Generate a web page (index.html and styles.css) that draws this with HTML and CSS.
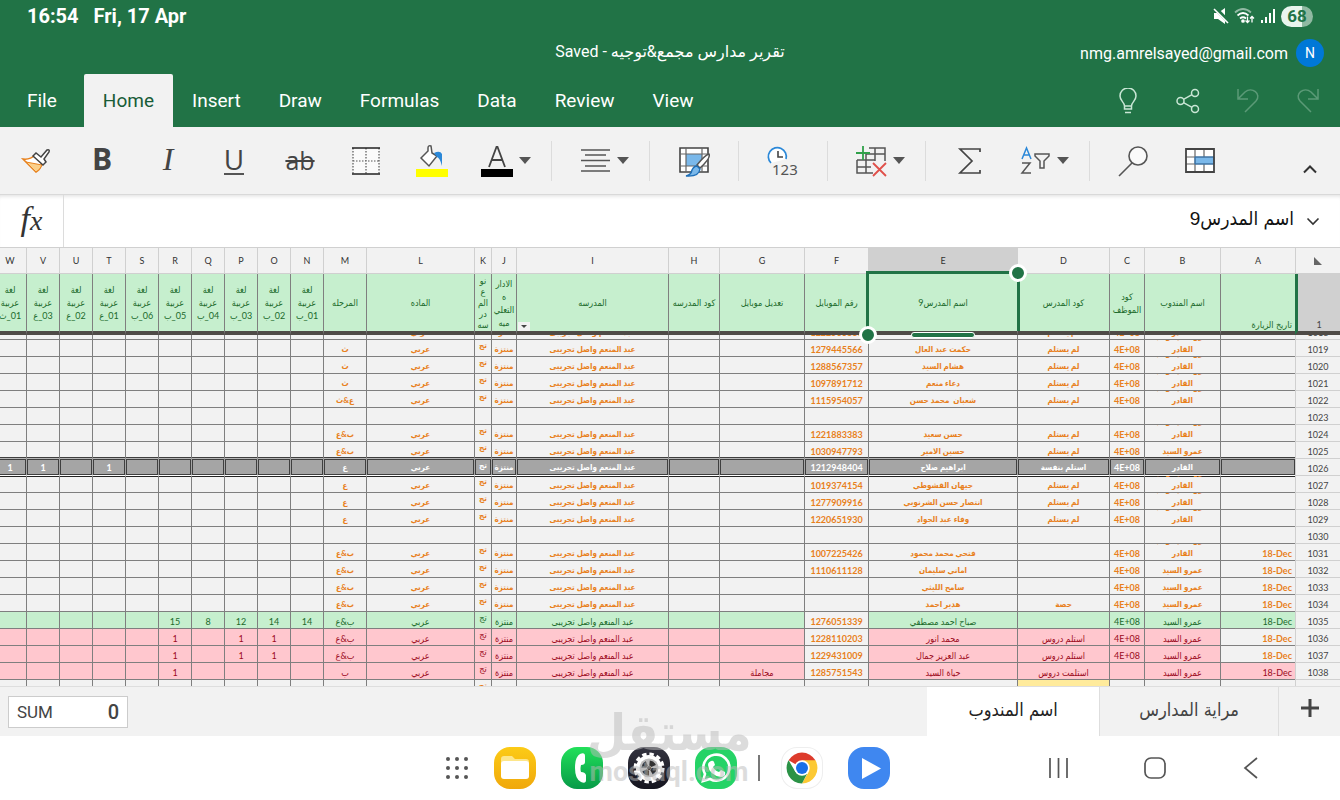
FILE: index.html
```html
<!DOCTYPE html>
<html lang="en">
<head>
  <meta charset="UTF-8">
  <meta name="viewport" content="width=device-width, initial-scale=1.0">
  <title>تقرير مدارس مجمع&amp;توجيه</title>
  <link rel="stylesheet" href="styles.css">
</head>
<body>
  <header class="app-header">
    <div class="status-bar">
      <span class="clock">16:54</span>
      <span class="date">Fri, 17 Apr</span>
      <div class="status-icons">
        <svg width="16" height="18" viewBox="0 0 16 18"><path d="M1 6h4l7-5v16l-7-5H1z" fill="#fff"/><path d="M1 0l15 15" stroke="#217346" stroke-width="4"/><path d="M1 2l14 14" stroke="#fff" stroke-width="1.600"/></svg>
        <svg width="21" height="18" viewBox="0 0 21 18" fill="none" stroke="#fff" stroke-width="1.700"><path d="M1 5.500q8-7 16 0" opacity=".5"/><path d="M3.500 8.500q5.500-5 11 0M6 11.500q3-2.500 6 0"/><circle cx="9" cy="14" r="1" fill="#fff"/><path d="M13.500 9.500v6m-2-2l2 2 2-2M18 15.500v-6m-2 2l2-2 2 2" stroke-width="1.300"/></svg>
        <svg width="16" height="18" viewBox="0 0 16 18" stroke="#fff" stroke-width="2"><path d="M2 13v3M6 10v6M10 6v10M14 2v14"/></svg>
        <span class="battery">68</span>
      </div>
    </div>
    <div class="title-bar">
      <div class="doc-title" dir="rtl">تقرير مدارس مجمع&amp;توجيه - Saved</div>
      <div class="account">
        <span>nmg.amrelsayed@gmail.com</span>
        <button class="avatar">N</button>
      </div>
    </div>
    <nav class="ribbon-tabs">
      <button class="tab file">File</button>
      <button class="tab active">Home</button>
      <button class="tab">Insert</button>
      <button class="tab">Draw</button>
      <button class="tab">Formulas</button>
      <button class="tab">Data</button>
      <button class="tab">Review</button>
      <button class="tab">View</button>
      <div class="header-actions">
        <button aria-label="Tell me"><svg width="24" height="26" viewBox="0 0 24 26"><path d="M8.500 18c0-4-4.500-5-4.500-10a8 8 0 0 1 16 0c0 5-4.500 6-4.500 10zM8.500 18v3h7v-3M9 24.500h6"/></svg></button>
        <button aria-label="Share"><svg width="24" height="26" viewBox="0 0 24 26"><circle cx="4.500" cy="13" r="3.500"/><circle cx="19" cy="5" r="3.500"/><circle cx="19" cy="21" r="3.500"/><path d="M7.500 11.300L16 6.700M7.500 14.700l8.500 4.600"/></svg></button>
        <button aria-label="Undo" disabled><svg width="24" height="26" viewBox="0 0 24 26"><path d="M2 1v10h10M2 11l7-7c7-6 17 2 11 9L9 24"/></svg></button>
        <button aria-label="Redo" disabled><svg width="24" height="26" viewBox="0 0 24 26"><path d="M22 1v10H12M22 11l-7-7C8-2 -2 6 4 13l11 11"/></svg></button>
      </div>
    </nav>
  </header>

  <div class="toolbar">
    <div class="group first">
      <button class="tool" aria-label="Format painter"><svg width="32" height="32" viewBox="0 0 32 32"><path d="M3 14q7 1 12-4l7 9q-2 6-6 8z" fill="#fff" stroke="#e8821e" stroke-width="1.500"/><path d="M6 17l16 3q-2 5-6 7z" fill="#fbd08a" stroke="#e8821e"/><path d="M13 11l3-3 5 4 6-7q3-1 2 2l-5 7 2 3-3 3z" fill="#fff" stroke="#444" stroke-width="1.500"/></svg></button>
      <button class="tool bold" aria-label="Bold">B</button>
      <button class="tool italic" aria-label="Italic">I</button>
      <button class="tool underline" aria-label="Underline"><span>U</span></button>
      <button class="tool strike" aria-label="Strikethrough"><span>ab</span></button>
      <button class="tool" aria-label="Borders"><svg width="32" height="32" viewBox="0 0 32 32"><path d="M3 3h26v26H3z" fill="#fafafa"/><path d="M3 3v26M29 3v26M16 3v26M3 16h26" stroke="#555" stroke-width="1.200" stroke-dasharray="1.500 1.500"/><path d="M2 3h28M2 29h28" stroke="#222" stroke-width="1.600"/></svg></button>
      <button class="tool" aria-label="Fill colour"><svg width="32" height="32" viewBox="0 0 32 32"><path d="M0 24h32v8H0z" fill="#ff0"/><path d="M5 13l7-7V3q0-3 3-2l1 7 5 3-8 10z" fill="#fff" stroke="#555" stroke-width="1.500"/><path d="M18 8q6-3 8 1v12q-2-8-5-9z" fill="#2b88d8"/></svg></button>
      <button class="tool drop" aria-label="Font colour"><svg width="32" height="32" viewBox="0 0 32 32"><path d="M0 24h32v8H0z"/><path d="M8 22L15.500 2h1L24 22M11 15h10" fill="none" stroke="#444" stroke-width="1.800"/></svg><i class="arrow"></i></button>
    </div>
    <div class="group">
      <button class="tool drop" aria-label="Alignment"><svg width="32" height="32" viewBox="0 0 32 32"><path d="M2 5h29M6 10h21M2 15.500h29M6 21h21M2 26h29" stroke="#555" stroke-width="1.600"/></svg><i class="arrow"></i></button>
    </div>
    <div class="group">
      <button class="tool" aria-label="Cell styles"><svg width="32" height="32" viewBox="0 0 32 32"><path d="M2 3h28v24H2z" fill="#fff" stroke="#444" stroke-width="1.600"/><path d="M8 9h16v12H8z" fill="#7ab8ea"/><path d="M8 3v24M24 3v24M2 9h28M2 21h28" stroke="#666" stroke-width="1.200"/><path d="M31 9q2 4-9 14l-3-3Q27 10 31 9z" fill="#fff" stroke="#555" stroke-width="1.500"/><path d="M19 21l3 3q-1 8-14 7 5-1 6-6 2-4 5-4z" fill="#7ab8ea" stroke="#1e6fb8" stroke-width="1.400"/></svg></button>
    </div>
    <div class="group">
      <button class="tool" aria-label="Number format"><svg width="32" height="32" viewBox="0 0 32 32"><path d="M4 18A9 9 0 1 1 19 14" fill="#fff" stroke="#2b88d8" stroke-width="1.700"/><path d="M11 6v6h5" fill="none" stroke="#444" stroke-width="1.600"/><text x="5" y="30" font-family="Noto Sans" font-size="15" fill="#555">123</text></svg></button>
    </div>
    <div class="group">
      <button class="tool drop" aria-label="Insert and delete cells"><svg width="32" height="32" viewBox="0 0 32 32"><path d="M14 3h16v13M2 15v13h16M2 15h18M11 9h19M11 9v19M20 3v13M2 22h14" fill="none" stroke="#555" stroke-width="1.500"/><path d="M8 1v14M1 8h14" stroke="#30a04a" stroke-width="1.800"/><path d="M18 18l13 13M31 18L18 31" stroke="#e0504a" stroke-width="1.800"/></svg><i class="arrow"></i></button>
    </div>
    <div class="group">
      <button class="tool" aria-label="AutoSum"><svg width="32" height="32" viewBox="0 0 32 32"><path d="M26 7V4H6l12 12L6 28h20v-3" fill="none" stroke="#444" stroke-width="1.700"/></svg></button>
      <button class="tool drop" aria-label="Sort and filter"><svg width="32" height="32" viewBox="0 0 32 32" fill="none" stroke-width="1.500"><path d="M3 14L7.500 3 12 14M4.500 10h6" stroke="#2b88d8"/><path d="M3 18h8L3 28h9M16 9h14v2l-5 5v7h-4v-7l-5-5z" stroke="#555"/></svg><i class="arrow"></i></button>
    </div>
    <div class="group last">
      <button class="tool" aria-label="Find"><svg width="32" height="32" viewBox="0 0 32 32"><circle cx="20" cy="11" r="9" fill="#fafafa" stroke="#555" stroke-width="1.600"/><path d="M14 18L1 31" stroke="#555" stroke-width="1.600"/></svg></button>
      <button class="tool" aria-label="Table"><svg width="32" height="32" viewBox="0 0 32 32"><path d="M2 4h28v23H2z" fill="#fff"/><path d="M11 12h19v7H11z" fill="#7ab8ea"/><path d="M2 12h28M2 19h28M11 4v23M20 4v8M20 19v8" stroke="#666" stroke-width="1.200"/><path d="M11 12h19v7H11z" fill="none" stroke="#2b78c0"/><path d="M2 4h28v23H2z" fill="none" stroke="#444" stroke-width="1.800"/></svg></button>
    </div>
    <button class="collapse" aria-label="Collapse ribbon"><svg width="16" height="10" viewBox="0 0 16 10"><path d="M2 8.500l6-6 6 6" fill="none" stroke="#333" stroke-width="2"/></svg></button>
  </div>

  <div class="formula-bar">
    <button class="fx" aria-label="Insert function"><i>f</i><i class="fx-x">x</i></button>
    <input class="formula-input" type="text" dir="rtl" aria-label="Formula" value="اسم المدرس9">
    <button class="expand" aria-label="Expand formula bar"><svg width="14" height="9" viewBox="0 0 14 9"><path d="M1.500 1.500L7 7l5.500-5.500" fill="none" stroke="#333" stroke-width="1.600"/></svg></button>
  </div>

  <main class="sheet" dir="rtl">
    <table class="grid">
      <colgroup id="cols"></colgroup>
      <thead>
        <tr class="letters" id="letters"></tr>
        <tr class="titles" id="titles"></tr>
      </thead>
      <tbody id="rows"></tbody>
    </table>
  </main>

  <footer class="sheet-bar">
    <button class="sum"><span>SUM</span><b>0</b></button>
    <div class="sheet-tabs">
      <button class="sheet-tab current">اسم المندوب</button>
      <button class="sheet-tab">مراية المدارس</button>
      <button class="add-sheet" aria-label="Add sheet"><svg width="18" height="18" viewBox="0 0 18 18"><path d="M9 0v18M0 9h18" stroke="#444" stroke-width="3"/></svg></button>
    </div>
  </footer>

  <nav class="taskbar">
    <div class="dock">
      <button aria-label="Apps"><svg width="24" height="24" viewBox="0 0 24 24" fill="#555"><circle cx="3" cy="3" r="2"/><circle cx="12" cy="3" r="2"/><circle cx="21" cy="3" r="2"/><circle cx="3" cy="12" r="2"/><circle cx="12" cy="12" r="2"/><circle cx="21" cy="12" r="2"/><circle cx="3" cy="21" r="2"/><circle cx="12" cy="21" r="2"/><circle cx="21" cy="21" r="2"/></svg></button>
      <button class="app files" aria-label="My Files"><svg width="42" height="42" viewBox="0 0 42 42"><path d="M7 12q0-3 3-3h8l3 3h11q3 0 3 3v6H7z" fill="#fde68a"/><rect x="7" y="14" width="28" height="18" rx="3" fill="#fff"/></svg></button>
      <button class="app phone" aria-label="Phone"><svg width="42" height="42" viewBox="0 0 42 42"><path d="M19 7q5-2 5 2v6q0 3-4 3-1 4 0 7 4 0 5 3v5q0 4-5 2-6-3-6-14t5-14z" fill="#fff"/></svg></button>
      <button class="app settings" aria-label="Settings"><svg width="42" height="42" viewBox="0 0 42 42"><circle cx="21" cy="21" r="14" fill="none" stroke="#fff" stroke-width="3" stroke-dasharray="4.400 2.930"/><circle cx="21" cy="21" r="13" fill="#fff"/><circle cx="21" cy="21" r="9.500" fill="#bbb"/><circle cx="21" cy="21" r="5" fill="none" stroke="#333" stroke-width="5" stroke-dasharray="5 2.850"/><circle cx="21" cy="21" r="2" fill="#333"/></svg></button>
      <button class="app whatsapp" aria-label="WhatsApp"><svg width="42" height="42" viewBox="0 0 42 42"><path d="M8 34l2-7a13 13 0 1 1 5 5z" fill="none" stroke="#fff" stroke-width="2.600"/><path d="M16 14q2-1 3 1l1 3-2 2q2 4 6 5l2-2 4 2q1 5-4 5-12-2-13-12 0-3 3-4z" fill="#fff"/></svg></button>
      <span class="divider"></span>
      <button class="app chrome" aria-label="Chrome"><svg width="42" height="42" viewBox="0 0 42 42"><path d="M21 21L7.600 13.300A15.500 15.500 0 0 1 34.400 13.300L28 21z" fill="#dd3b2c"/><path d="M21 13.300h13.400A15.500 15.500 0 0 1 21 36.500L27.500 25z" fill="#fcc934"/><path d="M7.600 13.300L14.500 25 26 27l-5 9.500A15.500 15.500 0 0 1 7.600 13.300z" fill="#2b9246"/><circle cx="21" cy="21" r="7.700" fill="#fff"/><circle cx="21" cy="21" r="6" fill="#1a6fe8"/></svg></button>
      <button class="app play" aria-label="Play"><svg width="42" height="42" viewBox="0 0 42 42"><path d="M14 11v21l19-10.500z" fill="#fff"/></svg></button>
    </div>
    <div class="system-nav">
      <button aria-label="Recents"><svg width="22" height="22" viewBox="0 0 22 22"><path d="M2 1v20M10.500 1v20M19 1v20"/></svg></button>
      <button aria-label="Home screen"><svg width="22" height="22" viewBox="0 0 22 22"><rect x="1" y="1" width="20" height="20" rx="6"/></svg></button>
      <button aria-label="Back"><svg width="22" height="22" viewBox="0 0 22 22"><path d="M17 1L5 11l12 10"/></svg></button>
    </div>
  </nav>

  <div class="watermark">
    <span class="watermark-ar">مستقل</span>
    <span class="watermark-en">mostaql.com</span>
  </div>

  <script>
    // letter, width, header title
    const columns = [
      ["A", 75, "تاريخ الزيارة"],
      ["B", 76, "اسم المندوب"],
      ["C", 35, "كود\nالموظف"],
      ["D", 92, "كود المدرس"],
      ["E", 149, "اسم المدرس9"],
      ["F", 64, "رقم الموبايل"],
      ["G", 85, "تعديل موبايل"],
      ["H", 51, "كود المدرسه"],
      ["I", 152, "المدرسه"],
      ["J", 25, "الادار\nه\nالتعلي\nميه"],
      ["K", 17, "نو\nع\nالم\nدر\nسه"],
      ["L", 108, "الماده"],
      ["M", 43, "المرحله"],
      ["N", 33, "لغة\nعربية\n01_ب"],
      ["O", 33, "لغة\nعربية\n02_ب"],
      ["P", 33, "لغة\nعربية\n03_ب"],
      ["Q", 33, "لغة\nعربية\n04_ب"],
      ["R", 33, "لغة\nعربية\n05_ب"],
      ["S", 33, "لغة\nعربية\n06_ب"],
      ["T", 33, "لغة\nعربية\n01_ع"],
      ["U", 33, "لغة\nعربية\n02_ع"],
      ["V", 33, "لغة\nعربية\n03_ع"],
      ["W", 33, "لغة\nعربية\n01_ث"]
    ];

    const qader = "عمرو السيد و عبد\nالقادر";
    const amr = "عمرو السيد";
    const no = "لم يستلم";
    const code = "4E+08";

    // every filled row has the same school
    const school = { I: "عبد المنعم واصل تجريبى", J: "منتزة", K: "تج\nريبى", L: "عربي" };

    const rows = [
      { n: 1018, cls: "cut-top", B: qader, C: code, D: no, F: "1222563886" },
      { n: 1019, B: qader, C: code, D: no, E: "حكمت عبد العال", F: "1279445566", M: "ث" },
      { n: 1020, B: qader, C: code, D: no, E: "هشام السيد", F: "1288567357", M: "ث" },
      { n: 1021, B: qader, C: code, D: no, E: "دعاء منعم", F: "1097891712", M: "ث" },
      { n: 1022, B: qader, C: code, D: no, E: "شعبان  محمد حسن", F: "1115954057", M: "ع&ث" },
      { n: 1023, empty: true },
      { n: 1024, B: qader, C: code, D: no, E: "حسن سعيد", F: "1221883383", M: "ب&ع" },
      { n: 1025, cls: "before-gray", B: amr, C: code, D: no, E: "حسين الامير", F: "1030947793", M: "ب&ع" },
      { n: 1026, cls: "gray", B: qader, C: code, D: "استلم بنفسة", E: "ابراهيم صلاح", F: "1212948404", M: "ع", T: 1, V: 1, W: 1 },
      { n: 1027, cls: "after-gray", B: qader, C: code, D: no, E: "جيهان القشوطي", F: "1019374154", M: "ع" },
      { n: 1028, B: qader, C: code, D: no, E: "انتصار حسن الشرنوبي", F: "1277909916", M: "ع" },
      { n: 1029, B: qader, C: code, D: no, E: "وفاء عبد الجواد", F: "1220651930", M: "ع" },
      { n: 1030, empty: true },
      { n: 1031, A: "18-Dec", B: qader, C: code, E: "فتحي محمد محمود", F: "1007225426", M: "ب&ع" },
      { n: 1032, A: "18-Dec", B: amr, C: code, E: "اماني سليمان", F: "1110611128", M: "ب&ع" },
      { n: 1033, A: "18-Dec", B: amr, C: code, E: "سامح الليثي", M: "ب&ع" },
      { n: 1034, A: "18-Dec", B: amr, C: code, D: "حصة", E: "هدير احمد", M: "ب&ع" },
      { n: 1035, cls: "good", plain: "F", A: "18-Dec", B: amr, C: code, E: "صباح احمد مصطفي", F: "1276051339", M: "ب&ع", N: 14, O: 14, P: 12, Q: 8, R: 15 },
      { n: 1036, cls: "bad", plain: "AF", A: "18-Dec", B: amr, C: code, D: "استلم دروس", E: "محمد انور", F: "1228110203", M: "ب&ع", O: 1, P: 1, R: 1 },
      { n: 1037, cls: "bad", plain: "AF", A: "18-Dec", B: amr, C: code, D: "استلم دروس", E: "عبد العزيز جمال", F: "1229431009", M: "ب&ع", O: 1, P: 1, R: 1 },
      { n: 1038, cls: "bad", plain: "F", A: "18-Dec", B: amr, D: "استلمت دروس", E: "حياة السيد", F: "1285751543", G: "مجاملة", M: "ب", R: 1 },
      { n: 1039, cls: "cut-bottom", empty: true, K: "تج" }
    ];

    function addCell(row, tag, className, text) {
      const cell = document.createElement(tag);
      cell.className = className;
      const box = document.createElement("div");
      box.className = "box";
      const label = document.createElement("span");
      label.textContent = text;
      if (/[\u0600-\u06ff]/.test(text)) label.className = "ar";
      box.appendChild(label);
      cell.appendChild(box);
      row.appendChild(cell);
      return cell;
    }

    const cols = document.getElementById("cols");
    [45, ...columns.map((c) => c[1])].forEach((width) => {
      const col = document.createElement("col");
      col.style.width = width + "px";
      cols.appendChild(col);
    });

    const letters = document.getElementById("letters");
    const titles = document.getElementById("titles");
    addCell(letters, "th", "corner", "");
    addCell(titles, "th", "row-number selected", "1");
    columns.forEach(([letter, width, title]) => {
      addCell(letters, "th", letter === "E" ? "selected" : "", letter);
      const cell = addCell(titles, "th", "col-" + letter.toLowerCase(), title);
      if (letter === "E") {
        cell.insertAdjacentHTML("beforeend", '<div class="selection"><i class="handle start"></i><i class="handle end"></i><i class="grip"></i></div>');
      }
      if (letter === "I") {
        cell.insertAdjacentHTML("beforeend", '<button class="filter" aria-label="Filter"></button>');
      }
    });

    const tbody = document.getElementById("rows");
    rows.forEach((data) => {
      const tr = document.createElement("tr");
      tr.className = data.cls || "";
      addCell(tr, "th", "row-number", data.n);
      const values = data.empty ? data : { ...school, ...data };
      columns.forEach(([letter]) => {
        const plain = data.plain && data.plain.includes(letter) ? " plain" : "";
        addCell(tr, "td", "col-" + letter.toLowerCase() + plain, values[letter] ?? "");
      });
      tbody.appendChild(tr);
    });
  </script>
</body>
</html>
```

FILE: styles.css
```css
* {
  box-sizing: border-box;
}

body {
  margin: 0;
  height: 100vh;
  display: flex;
  flex-direction: column;
  overflow: hidden;
  position: relative;
  font-family: Roboto, "DejaVu Sans", sans-serif;
  background: #fff;
  color: #333;
}

button {
  border: 0;
  padding: 0;
  background: none;
  color: inherit;
  font-family: inherit;
  cursor: pointer;
}

svg {
  display: block;
}

/* header */
.app-header {
  background: #217346;
  color: #fff;
}

.status-bar {
  display: flex;
  align-items: center;
  gap: 15px;
  height: 32px;
  padding: 0 27px;
  font-size: 20px;
  font-weight: bold;
}

.status-icons {
  display: flex;
  align-items: center;
  gap: 5px;
  margin-left: auto;
}

.battery {
  width: 32px;
  border-radius: 11px;
  background: linear-gradient(to right, #e9f5ee 66%, #90b9a2 66%);
  color: #217346;
  font-size: 17px;
  line-height: 21px;
  text-align: center;
}

.title-bar {
  display: grid;
  grid-template-columns: 1fr auto 1fr;
  align-items: center;
  height: 42px;
  padding: 0 16px;
}

.doc-title {
  grid-column: 2;
  padding-bottom: 4px;
  font-size: 16px;
}

.account {
  display: flex;
  justify-content: flex-end;
  align-items: center;
  gap: 8px;
  font-size: 16px;
}

.avatar {
  width: 28px;
  height: 28px;
  border-radius: 50%;
  background: #0078d7;
  font-size: 14px;
}

.ribbon-tabs {
  display: flex;
  height: 53px;
}

.tab {
  padding: 0 19px;
  font-size: 19px;
}

.tab.file {
  padding: 0 27px;
}

.tab.active {
  border-radius: 2px 2px 0 0;
  background: #f2f2f2;
  color: #185c37;
}

.header-actions {
  display: flex;
  gap: 36px;
  margin-left: auto;
  padding-right: 20px;
}

.header-actions svg {
  fill: none;
  stroke: #c9e6d5;
  stroke-width: 1.5;
}

.header-actions button:disabled svg {
  stroke: #5b9a77;
}

/* toolbar */
.toolbar {
  display: flex;
  align-items: center;
  height: 68px;
  background: #f2f2f2;
  border-bottom: 1px solid #d9d9d9;
}

.group {
  display: flex;
  align-items: center;
  height: 40px;
  padding: 0 11px;
  border-right: 1px solid #dcdcdc;
}

.group.first {
  padding-left: 3px;
}

.group.last {
  border-right: 0;
}

.tool {
  display: flex;
  justify-content: center;
  align-items: center;
  width: 66px;
  height: 40px;
  color: #444;
  font-family: "Open Sans", sans-serif;
  font-size: 28px;
}

.tool.drop {
  gap: 6px;
  width: 75px;
  padding-left: 6px;
}

.arrow {
  border: 6px solid transparent;
  border-top: 7px solid #555;
  border-bottom: 0;
}

.tool.bold {
  padding-bottom: 4px;
  font-size: 30px;
  font-weight: bold;
}

.tool.italic {
  padding-bottom: 2px;
  font-family: "Liberation Serif", serif;
  font-size: 32px;
  font-style: italic;
}

.underline span {
  border-bottom: 2px solid #555;
  line-height: 27px;
}

.tool.strike {
  padding-bottom: 2px;
  font-size: 25px;
  text-decoration: line-through 2px;
}

.collapse {
  margin-left: auto;
  padding: 16px 22px 0;
}

/* formula bar */
.formula-bar {
  display: flex;
  height: 52px;
  box-shadow: inset 0 4px 4px -3px #ddd;
}

.fx {
  width: 64px;
  padding-bottom: 4px;
  border-right: 1px solid #dcdcdc;
  font-family: "Liberation Serif", serif;
  font-size: 34px;
}

.fx-x {
  font-size: 28px;
}

.formula-input {
  flex: 1;
  min-width: 0;
  border: 0;
  padding: 0 10px 6px;
  background: none;
  color: #111;
  font-family: "Liberation Sans", "DejaVu Sans Condensed", "DejaVu Sans", sans-serif;
  font-size: 19px;
}

.expand {
  padding: 0 20px 0 2px;
}

/* sheet */
.sheet {
  flex: 1;
  min-height: 0;
  overflow: hidden;
  background: #f2f2f2;
}

.grid {
  width: 0;
  table-layout: fixed;
  border-collapse: separate;
  border-spacing: 0;
  font-family: Lato, "DejaVu Sans Condensed", "DejaVu Sans", sans-serif;
  font-size: 9px;
  line-height: 13px;
}

.grid th,
.grid td {
  position: relative;
  padding: 0;
  border-left: 1px solid #7f7f7f;
  border-bottom: 1px solid #7f7f7f;
  font-weight: normal;
  text-align: center;
}

.box {
  display: flex;
  justify-content: center;
  align-items: flex-end;
  height: 16px;
  overflow: hidden;
  white-space: pre;
}

.grid td {
  color: #e8801c;
  font-weight: bold;
}

td .ar {
  font-size: 8px;
}

.good .ar,
.bad .ar {
  font-size: 9px;
}

.grid .letters th {
  border-color: #d0d0d0;
  border-top: 1px solid #d0d0d0;
}

.letters .box {
  height: 25px;
  align-items: center;
}

.letters .selected {
  background: #d0d0d0;
}

.corner .box::after {
  content: "";
  border: 4px solid transparent;
  border-left-color: #666;
  border-bottom-color: #666;
}

.grid .row-number {
  border-left-color: #d0d0d0;
  border-bottom-color: #d0d0d0;
  color: #444;
}

.titles .box {
  height: 57px;
  align-items: center;
}

.grid .titles th {
  background: #c6efce;
  color: #1b6a2b;
  border-bottom: 4px solid #4f4b47;
}

.grid .titles .row-number {
  background: #d0d0d0;
  border-left: 3px solid #217346;
  color: #444;
}

.titles .row-number .box,
.titles .col-a .box {
  align-items: flex-end;
}

.col-a .box {
  justify-content: flex-start;
  padding-right: 3px;
}

td.col-a span {
  direction: ltr;
}

.col-k .box {
  line-height: 11px;
}

td.col-k .box {
  align-items: flex-start;
}

/* selected header cell */
.selection {
  position: absolute;
  z-index: 2;
  inset: -3px -3px 0 -3px;
  border: 3px solid #217346;
  border-bottom: 0;
}

.handle {
  position: absolute;
  width: 18px;
  height: 18px;
  border: 3px solid #fff;
  border-radius: 50%;
  background: #217346;
}

.handle.start {
  top: -10px;
  right: -10px;
}

.handle.end {
  bottom: -13px;
  left: -10px;
}

.grip {
  position: absolute;
  bottom: -7px;
  left: 42px;
  right: 42px;
  height: 6px;
  border: 1px solid #fff;
  border-radius: 3px;
  background: #217346;
}

.filter {
  position: absolute;
  left: 1px;
  bottom: 0;
  width: 12px;
  height: 9px;
  background: #f2f2f2;
}

.filter::after {
  content: "";
  display: block;
  width: 0;
  margin: 0 auto;
  border: 3px solid transparent;
  border-top-color: #444;
  border-bottom: 0;
}

/* row colours */
.good td {
  background: #c6efce;
  color: #1b6a2b;
  font-weight: normal;
}

.bad td {
  background: #ffc7ce;
  color: #9c0a1c;
  font-weight: normal;
}

.grid td.plain {
  background: #f2f2f2;
  color: #e8801c;
  font-weight: bold;
}

.grid .gray td {
  background: #a5a5a5;
  border-left-color: #a5a5a5;
  border-bottom-color: #fff;
  color: #fff;
}

.gray td .box {
  border: 1px solid #3f3f3f;
}

.grid .before-gray td {
  border-bottom-color: #b5b5b5;
  box-shadow: inset 0 -1px #3f3f3f;
}

.after-gray td {
  box-shadow: inset 0 1px #222;
}

.cut-top .box {
  height: 4px;
}

.cut-bottom .col-d {
  background: #ffeb9c;
}

/* sheet tabs */
.sheet-bar {
  display: flex;
  justify-content: space-between;
  align-items: center;
  height: 50px;
  padding-left: 8px;
  background: #f2f2f2;
  border-top: 1px solid #dedede;
}

.sum {
  display: flex;
  justify-content: space-between;
  align-items: center;
  width: 120px;
  height: 32px;
  padding: 0 8px;
  border: 1px solid #ccc;
  background: #fff;
  color: #444;
  font-size: 17px;
}

.sum b {
  font-size: 20px;
  font-weight: 500;
}

.sheet-tabs {
  display: flex;
  height: 100%;
}

.sheet-tab {
  min-width: 173px;
  padding: 0 39px 4px;
  border-right: 1px solid #dedede;
  color: #444;
  font-family: "DejaVu Sans Condensed", "DejaVu Sans", sans-serif;
  font-size: 18px;
}

.sheet-tab.current {
  background: #fff;
  color: #222;
}

.add-sheet {
  display: flex;
  justify-content: center;
  align-items: center;
  width: 61px;
  padding-bottom: 8px;
}

/* android bar */
.taskbar {
  display: grid;
  grid-template-columns: 1fr auto 1fr;
  align-items: center;
  height: 64px;
  padding-right: 6px;
}

.dock {
  grid-column: 2;
  display: flex;
  align-items: center;
  gap: 25px;
}

.app {
  width: 42px;
  height: 42px;
  border-radius: 16px;
}

.files {
  background: linear-gradient(#fccb16, #f0a80c);
}

.phone {
  background: linear-gradient(#22e05a, #079a48);
}

.settings {
  background: linear-gradient(#33333f, #15151f);
}

.whatsapp {
  background: #25d366;
}

.chrome {
  box-shadow: inset 0 0 0 1px #eee;
}

.play {
  background: #3f87f0;
}

.divider {
  width: 2px;
  height: 26px;
  margin: 0 -4px;
  background: #777;
}

.system-nav {
  display: flex;
  justify-content: flex-end;
  padding-right: 35px;
}

.system-nav button {
  display: flex;
  justify-content: center;
  width: 96px;
}

.system-nav svg {
  fill: none;
  stroke: #555;
  stroke-width: 1.7;
}

.watermark {
  position: absolute;
  left: 50%;
  bottom: 14px;
  width: 164px;
  margin-left: -83px;
  color: #bbb;
  opacity: 0.5;
  font-weight: bold;
  text-align: center;
  pointer-events: none;
}

.watermark span {
  display: block;
}

.watermark-ar {
  font-family: "DejaVu Sans Condensed", "DejaVu Sans", sans-serif;
  font-size: 50px;
  line-height: 50px;
}

.watermark-en {
  font-size: 27px;
  line-height: 28px;
}
```
